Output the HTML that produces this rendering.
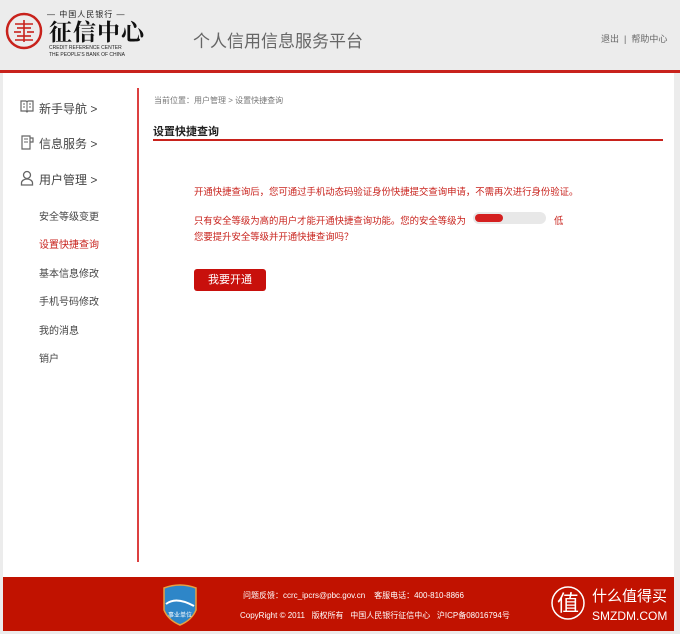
<!DOCTYPE html>
<html><head><meta charset="utf-8"><style>
*{margin:0;padding:0;box-sizing:border-box}
body{width:680px;height:634px;background:#ececec;font-family:"Liberation Sans","Noto Sans CJK SC",sans-serif;position:relative;overflow:hidden}
.a{position:absolute}
#hdr{left:0;top:0;width:680px;height:70px;background:#ececec}
#rl{left:0;top:70px;width:680px;height:3px;background:#c8221c}
#main{left:3px;top:73px;width:671px;height:504px;background:#fff}
#foot{left:3px;top:577px;width:671px;height:54px;background:#c11200}
.nav{font-size:12px;color:#444}
.sub{font-size:10px;color:#444}
.red{color:#c8221c}
</style></head><body>
<div class="a" id="hdr"></div>
<svg class="a" style="left:5px;top:12px" width="38" height="38" viewBox="0 0 38 38"><circle cx="19" cy="19" r="17" fill="none" stroke="#c8221c" stroke-width="2.5"/><g stroke="#c8221c" stroke-width="1.6"><line x1="10" y1="12" x2="28" y2="12"/><line x1="12" y1="16" x2="26" y2="16"/><line x1="9" y1="20" x2="16" y2="20"/><line x1="22" y1="20" x2="29" y2="20"/><line x1="12" y1="24" x2="26" y2="24"/><line x1="10" y1="28" x2="28" y2="28"/><line x1="19" y1="8" x2="19" y2="30"/></g></svg>
<div class="a" style="left:47px;top:9px;font-size:8px;color:#222;letter-spacing:1px">— 中国人民银行 —</div>
<div class="a" style="left:49px;top:18px;font-size:23px;color:#111;font-family:'Noto Serif CJK SC',serif;font-weight:bold;letter-spacing:1px;line-height:26px">征信中心</div>
<div class="a" style="left:49px;top:45px;font-size:5px;color:#222;line-height:7px">CREDIT REFERENCE CENTER<br>THE PEOPLE'S BANK OF CHINA</div>
<div class="a" style="left:193px;top:27px;font-size:17px;color:#666">个人信用信息服务平台</div>
<div class="a" style="left:601px;top:32px;font-size:9px;color:#666">退出 &nbsp;| &nbsp;帮助中心</div>
<div class="a" id="rl"></div>
<div class="a" id="main"></div>
<div class="a" style="left:137px;top:88px;width:1.5px;height:474px;background:#dc4040"></div>
<svg class="a" style="left:20px;top:100px" width="14" height="13" viewBox="0 0 14 13"><path d="M1 1h5l1 1 1-1h5v10H8l-1 1-1-1H1z" fill="none" stroke="#666" stroke-width="1.2"/><path d="M7 2v10M3 4h2M3 7h2M9 4h2M9 7h2" stroke="#666"/></svg>
<div class="a nav" style="left:39px;top:100px">新手导航 &gt;</div>
<svg class="a" style="left:20px;top:135px" width="14" height="15" viewBox="0 0 14 15"><path d="M2 1h8v13H2zM10 3h3v4h-3" fill="none" stroke="#666" stroke-width="1.2"/><path d="M4 4h4M4 7h4" stroke="#666"/></svg>
<div class="a nav" style="left:39px;top:135px">信息服务 &gt;</div>
<svg class="a" style="left:20px;top:170px" width="14" height="16" viewBox="0 0 14 16"><circle cx="7" cy="5" r="3.5" fill="none" stroke="#666" stroke-width="1.3"/><path d="M1.5 15v-2a5.5 4 0 0 1 11 0v2z" fill="none" stroke="#666" stroke-width="1.3"/></svg>
<div class="a nav" style="left:39px;top:171px">用户管理 &gt;</div>
<div class="a sub" style="left:39px;top:208px">安全等级变更</div>
<div class="a sub red" style="left:39px;top:236px">设置快捷查询</div>
<div class="a sub" style="left:39px;top:265px">基本信息修改</div>
<div class="a sub" style="left:39px;top:293px">手机号码修改</div>
<div class="a sub" style="left:39px;top:322px">我的消息</div>
<div class="a sub" style="left:39px;top:350px">销户</div>
<div class="a" style="left:154px;top:95px;font-size:8px;color:#777">当前位置：用户管理 &gt; 设置快捷查询</div>
<div class="a" style="left:153px;top:123px;font-size:11px;color:#222;font-weight:bold">设置快捷查询</div>
<div class="a" style="left:153px;top:139px;width:510px;height:1.5px;background:#c8221c"></div>
<div class="a red" style="left:194px;top:184px;font-size:9.4px">开通快捷查询后，您可通过手机动态码验证身份快捷提交查询申请，不需再次进行身份验证。</div>
<div class="a red" style="left:194px;top:213px;font-size:9.4px">只有安全等级为高的用户才能开通快捷查询功能。您的安全等级为</div>
<div class="a" style="left:473px;top:212px;width:73px;height:12px;background:#e8e8e8;border-radius:6px"></div>
<div class="a" style="left:475px;top:214px;width:28px;height:8px;background:#d42020;border-radius:4px"></div>
<div class="a red" style="left:554px;top:213px;font-size:9.4px">低</div>
<div class="a red" style="left:194px;top:229px;font-size:9.4px">您要提升安全等级并开通快捷查询吗？</div>
<div class="a" style="left:194px;top:269px;width:72px;height:22px;background:#c8100c;border-radius:3px;color:#fff;font-size:11px;text-align:center;line-height:22px">我要开通</div>
<div class="a" id="foot"></div>
<svg class="a" style="left:162px;top:584px" width="36" height="42" viewBox="0 0 36 42"><path d="M2 4Q18-2 34 4V26Q30 36 18 41Q6 36 2 26z" fill="#2e86c8" stroke="#e8a040" stroke-width="1.5"/><path d="M4 20Q14 12 32 22" stroke="#fff" stroke-width="2" fill="none"/><text x="18" y="33" font-size="6" fill="#fff" text-anchor="middle" font-family="Noto Sans CJK SC">事业单位</text></svg>
<div class="a" style="left:243px;top:590px;font-size:8px;color:#fff">问题反馈：ccrc_ipcrs@pbc.gov.cn &nbsp;&nbsp;&nbsp;客服电话：400-810-8866</div>
<div class="a" style="left:240px;top:610px;font-size:8px;color:#fff">CopyRight © 2011 &nbsp;&nbsp;版权所有 &nbsp;&nbsp;中国人民银行征信中心 &nbsp;&nbsp;沪ICP备08016794号</div>
<svg class="a" style="left:550px;top:584px" width="36" height="38" viewBox="0 0 36 38"><circle cx="18" cy="19" r="16" fill="none" stroke="#fff" stroke-width="1.5"/><text x="18" y="27" font-size="22" fill="#fff" text-anchor="middle" font-family="Noto Sans CJK SC">值</text></svg>
<div class="a" style="left:592px;top:585px;font-size:15px;color:#fff">什么值得买</div>
<div class="a" style="left:592px;top:609px;font-size:12px;color:#fff">SMZDM.COM</div>
</body></html>
